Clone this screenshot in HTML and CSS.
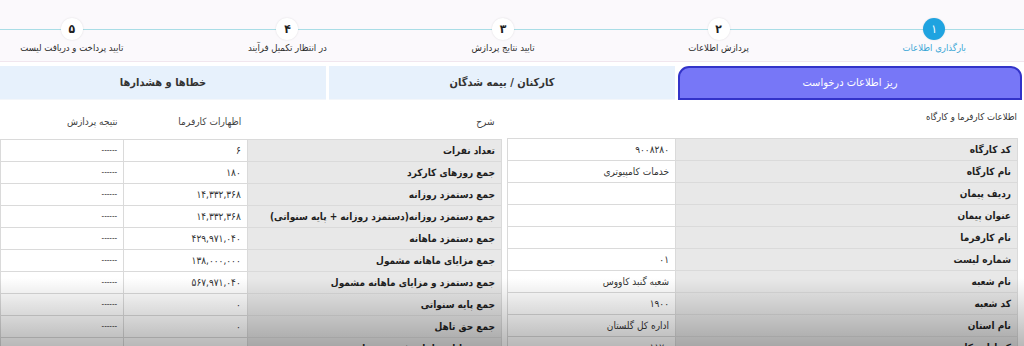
FILE: index.html
```html
<!DOCTYPE html>
<html lang="fa" dir="rtl">

<head>
    <meta charset="UTF-8">
    <meta name="viewport" content="width=device-width, initial-scale=1.0">
    <title>ریز اطلاعات درخواست</title>
    <link rel="stylesheet" href="styles.css">
</head>

<body>
    <div class="stepper">
        <div class="steps">
            <div class="step done">
                <div class="track"><span class="dot">۱</span></div>
                <p class="label">بارگذاری اطلاعات</p>
            </div>
            <div class="step">
                <div class="track"><span class="dot">۲</span></div>
                <p class="label">پردازش اطلاعات</p>
            </div>
            <div class="step">
                <div class="track"><span class="dot">۳</span></div>
                <p class="label">تایید نتایج پردازش</p>
            </div>
            <div class="step">
                <div class="track"><span class="dot">۴</span></div>
                <p class="label">در انتظار تکمیل فرآیند</p>
            </div>
            <div class="step">
                <div class="track"><span class="dot">۵</span></div>
                <p class="label">تایید پرداخت و دریافت لیست</p>
            </div>
        </div>
    </div>

    <div class="tabs">
        <div class="tab active">ریز اطلاعات درخواست</div>
        <div class="tab mid">کارکنان / بیمه شدگان</div>
        <div class="tab last">خطاها و هشدارها</div>
    </div>

    <div class="panels">
        <div class="panel info">
            <p class="title">اطلاعات کارفرما و کارگاه</p>
            <table class="grid">
                <tr><th>کد کارگاه</th><td>۹۰۰۸۲۸۰</td></tr>
                <tr><th>نام کارگاه</th><td>خدمات کامپیوتری</td></tr>
                <tr><th>ردیف پیمان</th><td></td></tr>
                <tr><th>عنوان پیمان</th><td></td></tr>
                <tr><th>نام کارفرما</th><td></td></tr>
                <tr><th>شماره لیست</th><td>۰۱</td></tr>
                <tr><th>نام شعبه</th><td>شعبه گنبد کاووس</td></tr>
                <tr><th>کد شعبه</th><td>۱۹۰۰</td></tr>
                <tr><th>نام استان</th><td>اداره کل گلستان</td></tr>
                <tr><th>کد اداره کل</th><td>۱۱۷۰</td></tr>
            </table>
        </div>

        <div class="panel sums">
            <table class="grid">
                <tr class="head"><td>شرح</td><td>اظهارات کارفرما</td><td>نتیجه پردازش</td></tr>
                <tr><th>تعداد نفرات</th><td>۶</td><td class="dash">------</td></tr>
                <tr><th>جمع روزهای کارکرد</th><td>۱۸۰</td><td class="dash">------</td></tr>
                <tr><th>جمع دستمزد روزانه</th><td>۱۴,۳۳۲,۳۶۸</td><td class="dash">------</td></tr>
                <tr><th>جمع دستمزد روزانه(دستمزد روزانه + پایه سنواتی)</th><td>۱۴,۳۳۲,۳۶۸</td><td class="dash">------</td></tr>
                <tr><th>جمع دستمزد ماهانه</th><td>۴۲۹,۹۷۱,۰۴۰</td><td class="dash">------</td></tr>
                <tr><th>جمع مزایای ماهانه مشمول</th><td>۱۳۸,۰۰۰,۰۰۰</td><td class="dash">------</td></tr>
                <tr><th>جمع دستمزد و مزایای ماهانه مشمول</th><td>۵۶۷,۹۷۱,۰۴۰</td><td class="dash">------</td></tr>
                <tr><th>جمع پایه سنواتی</th><td>۰</td><td class="dash">------</td></tr>
                <tr><th>جمع حق تاهل</th><td>۰</td><td class="dash">------</td></tr>
                <tr><th>جمع مزایای ماهانه غیر مشمول</th><td>۰</td><td class="dash">------</td></tr>
            </table>
        </div>
    </div>

    <div class="shade"></div>
</body>

</html>
```

FILE: styles.css
```css
body {
    margin: 0;
    padding: 0;
    background-color: #fff;
    font-family: "DejaVu Sans Condensed", "DejaVu Sans", sans-serif;
    font-stretch: condensed;
    color: #2b2b2b;
    overflow: hidden;
    height: 346px;
    position: relative;
}

p {
    margin: 0;
}

/* stepper */

.stepper {
    height: 61px;
    background-color: #fbf9fc;
    border-bottom: 1px solid #f1e6ee;
}

.steps {
    display: flex;
    margin: 0 -18px 0 -36px;
    padding-top: 18px;
}

.step {
    flex: 1;
    text-align: center;
}

.track {
    height: 22px;
    background: linear-gradient(#a9dde6, #a9dde6) 0 11px / 100% 1px no-repeat;
}

.dot {
    display: inline-block;
    width: 22px;
    height: 22px;
    line-height: 22px;
    border-radius: 50%;
    background-color: #fff;
    box-shadow: 0 0 2px rgba(0, 0, 0, 0.12);
    font-size: 12px;
    font-weight: bold;
    color: #1d1d1d;
}

.label {
    margin-top: 1px;
    font-size: 9.5px;
    line-height: 13px;
    color: #2d2d2d;
}

.done .dot {
    background-color: #1fa3e0;
    color: #fff;
    font-weight: normal;
}

.done .label {
    color: #3aa7d6;
}

/* tabs */

.tabs {
    display: flex;
    gap: 3px;
    margin-top: 4px;
    padding-right: 2px;
    height: 34px;
}

.tab {
    background-color: #e7f1fc;
    font-size: 11px;
    font-weight: bold;
    color: #333;
    text-align: center;
    line-height: 33px;
    border-bottom: 1px solid #f3f6fa;
}

.tab.active {
    flex: 0 0 340px;
    background-color: #7777f7;
    border: 2px solid #3333c9;
    border-radius: 11px 11px 0 0;
    line-height: 30px;
    font-weight: normal;
    color: #fff;
}

.tab.mid {
    flex: 0 0 346px;
}

.tab.last {
    flex: 1;
}

/* tables */

.panels {
    display: flex;
    gap: 5px;
    padding-right: 6px;
}

.panel.info {
    flex: 0 0 511px;
}

.panel.sums {
    flex: 1;
}

.title {
    font-size: 9.5px;
    line-height: 14px;
    padding: 10px 1px 14px 0;
    color: #333;
}

.grid {
    width: 100%;
    border-collapse: collapse;
    font-size: 10px;
}

.grid th,
.grid td {
    height: 21px;
    padding: 0 6px;
    border: 1px solid #dadada;
    text-align: right;
    white-space: nowrap;
}

.grid th {
    background-color: #e8e8e8;
    font-weight: bold;
    color: #1f1f1f;
}

.grid td {
    color: #333;
}

.info th {
    width: 329px;
}

.sums .head td {
    border: none;
    height: 36px;
    padding-top: 3px;
    color: #444;
}

.sums th {
    width: 242px;
}

.sums td {
    width: 113px;
}

.sums .head td:first-child {
    padding-right: 7px;
}

.dash {
    color: #888;
    font-size: 8px;
}

/* video overlay at the bottom */

.shade {
    position: absolute;
    left: 0;
    right: 0;
    bottom: 0;
    height: 68px;
    background: linear-gradient(rgba(0, 0, 0, 0), rgba(0, 0, 0, 0.28));
    pointer-events: none;
}
```
